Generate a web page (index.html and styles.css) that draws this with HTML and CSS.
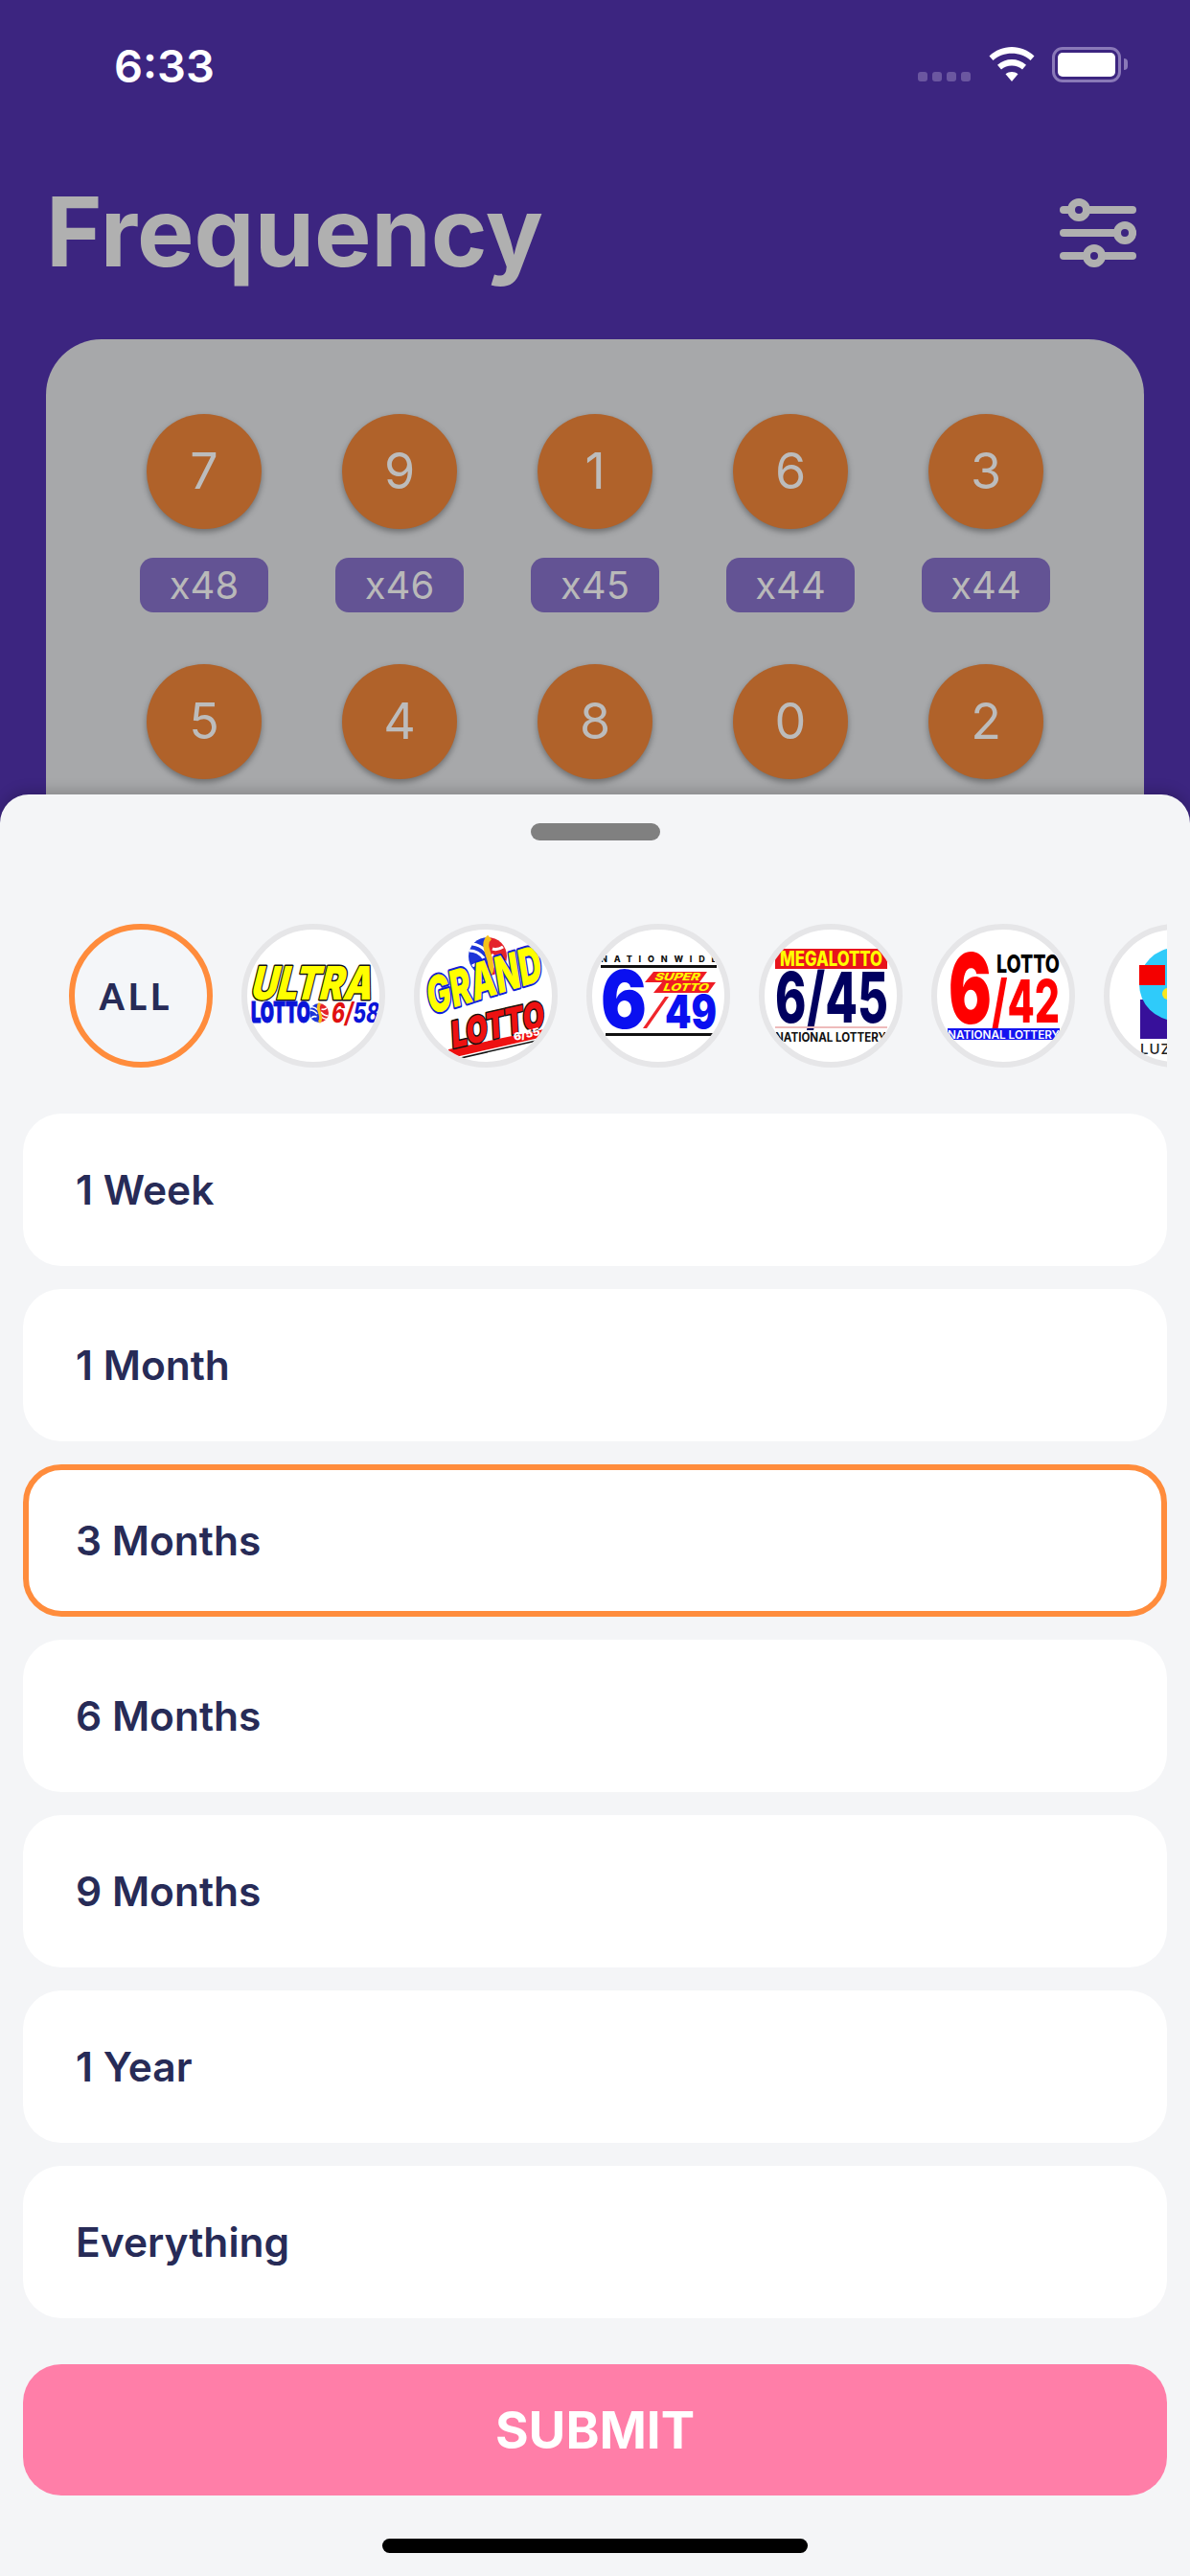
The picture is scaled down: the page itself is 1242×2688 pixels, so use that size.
FILE: index.html
```html
<!DOCTYPE html>
<html lang="en">
<head>
<meta charset="utf-8">
<title>Frequency</title>
<link rel="stylesheet" href="styles.css">
</head>
<body>
<div class="screen">
  <div class="status">
    <span class="time">6:33</span>
    <div class="status-icons">
      <div class="signal"><i></i><i></i><i></i><i></i></div>
      <svg class="wifi" viewBox="0 0 48 36"><path d="M24 0C15 0 7 3.500 0.500 9.500L4.500 14C10 9.200 16.500 6.800 24 6.800S38 9.200 43.500 14L47.500 9.500C41 3.500 33 0 24 0Z"/><path d="M24 13C18.500 13 13.500 15 9 18.800L13 23.400C16 20.800 19.800 19.500 24 19.500S32 20.800 35 23.400L39 18.800C34.500 15 29.500 13 24 13Z"/><path d="M24 26C21.500 26 19.500 26.800 17.500 28.300L24 36L30.500 28.300C28.500 26.800 26.500 26 24 26Z"/></svg>
      <div class="battery"><div class="battery-level"></div></div>
      <div class="battery-nub"></div>
    </div>
  </div>

  <header class="head">
    <h1 class="title">Frequency</h1>
    <svg class="filter" viewBox="0 0 80 72">
      <g class="filter-lines"><rect x="0" y="8" width="80" height="8" rx="4"/><rect x="0" y="32" width="80" height="8" rx="4"/><rect x="0" y="56" width="80" height="8" rx="4"/></g>
      <circle class="knob" cx="20" cy="12" r="8"/><circle class="knob" cx="68" cy="36" r="8"/><circle class="knob" cx="36" cy="60" r="8"/>
    </svg>
  </header>

  <section class="card">
    <div class="grid">
      <div class="cell"><div class="ball">7</div><div class="count">x48</div></div>
      <div class="cell"><div class="ball">9</div><div class="count">x46</div></div>
      <div class="cell"><div class="ball">1</div><div class="count">x45</div></div>
      <div class="cell"><div class="ball">6</div><div class="count">x44</div></div>
      <div class="cell"><div class="ball">3</div><div class="count">x44</div></div>
      <div class="cell"><div class="ball">5</div></div>
      <div class="cell"><div class="ball">4</div></div>
      <div class="cell"><div class="ball">8</div></div>
      <div class="cell"><div class="ball">0</div></div>
      <div class="cell"><div class="ball">2</div></div>
    </div>
  </section>

  <section class="sheet">
    <div class="handle"></div>
    <div class="games">
      <div class="game game-all">ALL</div>

      <div class="game">
        <svg class="logo" viewBox="0 0 150 150">
          <defs>
            <g id="swirl">
              <circle r="10" fill="#fff"/>
              <path d="M0-10A10 10 0 0 0 0 10Z" fill="#1d35d8"/>
              <path d="M0-10A10 10 0 0 1 0 10Z" fill="#e4232b"/>
              <path d="M-9.500-3Q-5-3-2 1M-8-6.500Q-4-6-1-3M-8 5Q-5 3-2.500 4" class="swirl-white"/>
              <path d="M9.500 3Q5 3 2 -1M8 6.500Q4 6 1 3M8-5Q5-3 2.500-4" class="swirl-white"/>
              <path d="M1-10C-5-5 6 4 0 9.800" class="swirl-yellow"/>
            </g>
          </defs>
          <text class="lg-ultra" transform="translate(8 79) skewX(-14)" textLength="127" lengthAdjust="spacingAndGlyphs">ULTRA</text>
          <text class="lg-ulotto" x="10" y="103" textLength="62" lengthAdjust="spacingAndGlyphs">LOTTO</text>
          <use href="#swirl" transform="translate(81 93)"/>
          <text class="lg-658" transform="translate(93 103) skewX(-8)" textLength="50" lengthAdjust="spacingAndGlyphs"><tspan class="lg-red">6/</tspan><tspan class="lg-blue">58</tspan></text>
        </svg>
      </div>

      <div class="game">
        <svg class="logo" viewBox="0 0 150 150">
          <use href="#swirl" transform="translate(77 34) scale(2)"/>
          <text class="lg-grand" transform="translate(17 95) rotate(-17) skewX(-8)" textLength="124" lengthAdjust="spacingAndGlyphs">GRAND</text>
          <path d="M36 131L136 110L135 118L35 141Z" class="lg-band"/>
          <path d="M36 143L132 121" class="lg-band-line"/>
          <text class="lg-glotto" transform="translate(40 130) rotate(-13) skewX(-10)" textLength="99" lengthAdjust="spacingAndGlyphs">LOTTO</text>
          <text class="lg-g655" transform="translate(105 122) rotate(-13)" textLength="28" lengthAdjust="spacingAndGlyphs">6/55</text>
        </svg>
      </div>

      <div class="game">
        <svg class="logo" viewBox="0 0 150 150">
          <text class="lg-nation" x="15" y="40" textLength="121">NATIONWIDE</text>
          <rect x="15" y="43" width="121" height="3" fill="#111"/>
          <text class="lg-649" x="15" y="109" textLength="48" lengthAdjust="spacingAndGlyphs">6</text>
          <path d="M59 109L82 76H86L63 109Z" fill="#f0252b"/>
          <polygon points="61,61 70,50 126,50 118,61" fill="#ee1c25"/>
          <polygon points="70,72 79,61 135,61 127,72" fill="#ee1c25"/>
          <text class="lg-super" transform="translate(71 59) skewX(-12)" textLength="47" lengthAdjust="spacingAndGlyphs">SUPER</text>
          <text class="lg-super" transform="translate(80 70) skewX(-12)" textLength="47" lengthAdjust="spacingAndGlyphs">LOTTO</text>
          <text class="lg-49" x="82" y="109" textLength="54" lengthAdjust="spacingAndGlyphs">49</text>
          <rect x="20" y="114" width="112" height="3" fill="#111"/>
        </svg>
      </div>

      <div class="game">
        <svg class="logo" viewBox="0 0 150 150">
          <rect x="17" y="26" width="117" height="21" fill="#e8141c"/>
          <text class="lg-mega" x="22" y="44" textLength="107" lengthAdjust="spacingAndGlyphs">MEGALOTTO</text>
          <text class="lg-645" x="17" y="103" textLength="118" lengthAdjust="spacingAndGlyphs">6/45</text>
          <rect x="17" y="107" width="117" height="2" fill="#eebbbb"/>
          <text class="lg-natl" x="17" y="123" textLength="116" lengthAdjust="spacingAndGlyphs">NATIONAL LOTTERY</text>
        </svg>
      </div>

      <div class="game">
        <svg class="logo" viewBox="0 0 150 150">
          <text class="lg-6red" x="18" y="104" textLength="45" lengthAdjust="spacingAndGlyphs">6</text>
          <text class="lg-lblack" x="68" y="51" textLength="66" lengthAdjust="spacingAndGlyphs">LOTTO</text>
          <text class="lg-42" x="63" y="103" textLength="71" lengthAdjust="spacingAndGlyphs">/42</text>
          <rect x="17" y="109" width="117" height="12" fill="#1414f0"/>
          <text class="lg-natb" x="17" y="120" textLength="117" lengthAdjust="spacingAndGlyphs">NATIONAL LOTTERY</text>
        </svg>
      </div>

      <div class="game">
        <svg class="logo" viewBox="0 0 150 150">
          <rect x="38" y="79" width="30" height="41" fill="#37109a"/>
          <circle cx="75" cy="63" r="38" fill="#2fcbfa"/>
          <rect x="37" y="43" width="27" height="21" fill="#f40000"/>
          <circle cx="67" cy="73" r="6" fill="#f8e71c"/>
          <text class="lg-luz" x="38" y="136">LUZON</text>
        </svg>
      </div>
    </div>

    <div class="options">
      <div class="option">1 Week</div>
      <div class="option">1 Month</div>
      <div class="option option-active">3 Months</div>
      <div class="option">6 Months</div>
      <div class="option">9 Months</div>
      <div class="option">1 Year</div>
      <div class="option">Everything</div>
    </div>

    <button class="submit">SUBMIT</button>
    <div class="home-bar"></div>
  </section>
</div>
</body>
</html>
```

FILE: styles.css
```css
* { box-sizing: border-box; }
html, body { margin: 0; padding: 0; }
body { width: 1242px; height: 2688px; overflow: hidden; font-family: Inter, "Liberation Sans", sans-serif; }

.screen { position: relative; width: 1242px; height: 2688px; background: #3c2580; overflow: hidden; display: flex; flex-direction: column; }

.status { height: 136px; padding: 45px 65px 0 119px; display: flex; justify-content: space-between; align-items: flex-start; }
.time { color: #fff; font-size: 47px; font-weight: 600; line-height: 48px; }
.status-icons { display: flex; align-items: flex-start; padding-top: 4px; }
.signal { display: flex; gap: 5px; margin: 26px 19px 0 0; }
.signal i { display: block; width: 10px; height: 10px; border-radius: 3px; background: #6b57a0; }
.wifi { width: 48px; height: 36px; fill: #fff; margin-right: 18px; }
.battery { width: 72px; height: 37px; border: 3px solid #8a79b8; border-radius: 11px; padding: 3px; }
.battery-level { width: 100%; height: 100%; background: #fff; border-radius: 5px; }
.battery-nub { width: 4px; height: 12px; margin: 12px 0 0 3px; background: #8a79b8; border-radius: 0 4px 4px 0; }

.head { height: 218px; padding: 0 56px 0 48px; display: flex; justify-content: space-between; align-items: flex-start; }
.title { margin: 48px 0 0; color: #b0b0b0; font-size: 100px; font-weight: 700; line-height: 116px; letter-spacing: 0; }
.filter { width: 80px; height: 72px; margin-top: 71px; }
.filter-lines { fill: #b0b0b0; }
.knob { fill: #3c2580; stroke: #b0b0b0; stroke-width: 8px; }

.card { margin: 0 48px; height: 700px; background: #a7a8aa; border-radius: 58px; padding: 78px 63px 0; }
.grid { display: grid; grid-template-columns: repeat(5, 204px); grid-auto-rows: 261px; }
.cell { display: flex; flex-direction: column; align-items: center; }
.ball { width: 120px; height: 120px; border-radius: 50%; background: #b0622a; color: #bcbcbc; font-size: 52px; line-height: 120px; text-align: center; box-shadow: 0 3px 6px rgba(0, 0, 0, .35); }
.count { margin-top: 30px; width: 134px; height: 57px; border-radius: 14px; background: #635394; color: #b9b9b9; font-size: 40px; line-height: 57px; text-align: center; }

.sheet { position: absolute; left: 0; right: 0; top: 829px; bottom: 0; background: #f4f5f7; border-radius: 30px 30px 0 0; box-shadow: 0 -4px 14px rgba(0, 0, 0, .18); padding: 30px 24px 0; display: flex; flex-direction: column; }
.handle { align-self: center; width: 135px; height: 18px; border-radius: 9px; background: #808080; flex: none; }
.games { margin-top: 87px; padding-left: 48px; display: flex; gap: 30px; overflow: hidden; flex: none; }
.game { flex: none; width: 150px; height: 150px; border-radius: 50%; border: 6px solid #e6e6e8; background: #fff; overflow: hidden; position: relative; }
.game-all { border-color: #ff8c3c; background: #f4f6f9; color: #272b57; font-family: Lato, sans-serif; font-weight: 900; font-size: 37px; letter-spacing: 4px; padding-right: 10px; display: flex; align-items: center; justify-content: center; }
.logo { position: absolute; left: -6px; top: -6px; width: 150px; height: 150px; font-family: Inter, "Liberation Sans", sans-serif; font-weight: 900; }

.swirl-white { fill: none; stroke: #fff; stroke-width: 1.6px; }
.swirl-yellow { fill: none; stroke: #f6c21a; stroke-width: 3px; }

.lg-ultra { font-size: 48px; fill: #ffff00; stroke: #111; stroke-width: 3px; paint-order: stroke; stroke-linejoin: round; }
.lg-ulotto { font-size: 30px; fill: #0a14d8; stroke: #0a14d8; stroke-width: 1px; }
.lg-658 { font-size: 29px; font-weight: 800; }
.lg-red { fill: #e01010; }
.lg-blue { fill: #0a14d8; }

.lg-grand { font-size: 52px; fill: #ffff00; stroke: #1020d8; stroke-width: 4px; paint-order: stroke; stroke-linejoin: round; }
.lg-band { fill: #ee1111; }
.lg-band-line { fill: none; stroke: #111; stroke-width: 1.5px; }
.lg-glotto { font-size: 38px; fill: #ee1111; stroke: #111; stroke-width: 3px; paint-order: stroke; stroke-linejoin: round; }
.lg-g655 { font-size: 11px; fill: #fff; }

.lg-nation { font-size: 9px; fill: #111; font-weight: 800; }
.lg-649 { font-size: 84px; fill: #0a10f0; }
.lg-49 { font-size: 48px; fill: #0a10f0; }
.lg-super { font-size: 11px; fill: #ffff00; font-weight: 800; font-style: italic; }

.lg-mega { font-size: 21px; fill: #ffff00; font-weight: 800; }
.lg-645 { font-size: 73px; fill: #00005f; font-weight: 800; }
.lg-natl { font-size: 13px; fill: #111; font-weight: 700; }

.lg-6red { font-size: 102px; fill: #ff0000; }
.lg-lblack { font-size: 26px; fill: #000; font-weight: 800; }
.lg-42 { font-size: 62px; fill: #ff0000; font-weight: 800; }
.lg-natb { font-size: 12px; fill: #fff; font-weight: 600; }

.lg-luz { font-size: 15px; fill: #222; font-weight: 500; letter-spacing: 1px; }

.options { margin-top: 48px; display: flex; flex-direction: column; gap: 24px; flex: none; }
.option { height: 159px; border-radius: 40px; background: #fff; padding-left: 55px; display: flex; align-items: center; color: #272b57; font-size: 42.5px; font-weight: 600; }
.option-active { border: 6px solid #ff8c3c; padding-left: 49px; }

.submit { margin-top: 48px; height: 137px; flex: none; border: 0; border-radius: 40px; background: #ff7ea8; color: #fff; font-family: Inter, sans-serif; font-size: 53px; font-weight: 700; }
.home-bar { align-self: center; margin-top: 45px; width: 444px; height: 15px; border-radius: 8px; background: #000; flex: none; }
```
